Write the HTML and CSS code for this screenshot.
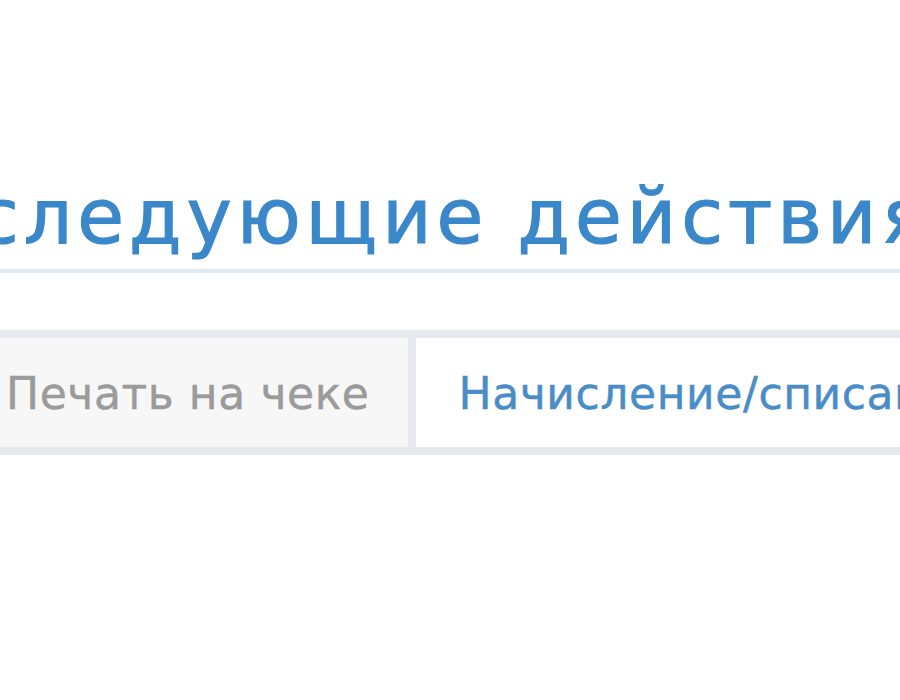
FILE: index.html
```html
<!DOCTYPE html>
<html lang="ru">
<head>
<meta charset="utf-8">
<link rel="stylesheet" href="styles.css">
</head>
<body>
<div class="page">
  <h2 class="title">следующие действия</h2>
  <div class="tabs">
    <div class="tab tab-active">Печать на чеке</div>
    <div class="tab tab-link">Начисление/списание баллов</div>
  </div>
</div>
</body>
</html>
```
FILE: styles.css
```css
html, body {
  margin: 0;
  padding: 0;
  background: #ffffff;
  overflow: hidden;
}
.page {
  width: 900px;
  height: 700px;
  overflow: hidden;
  font-family: "DejaVu Sans", Verdana, sans-serif;
  padding-top: 167px;
  box-sizing: border-box;
}
.title {
  margin: 0 0 0 -23px;
  font-weight: normal;
  font-size: 76px;
  letter-spacing: 5px;
  line-height: 100px;
  color: #3a87c9;
  -webkit-text-stroke: 1.2px #3a87c9;
  white-space: nowrap;
  padding-bottom: 2px;
  border-bottom: 4px solid #dfe9f4;
  width: 1200px;
}
.tabs {
  margin: 57px 0 0 -36px;
  display: flex;
  border-top: 8px solid #e6eaef;
  border-bottom: 8px solid #e6eaef;
  width: 1300px;
  white-space: nowrap;
}
.tab {
  font-size: 44px;
  line-height: 106px;
  letter-spacing: 0.6px;
  padding: 3px 43px 0;
}
.tab-active {
  padding-left: 42px;
  padding-right: 38px;
  background: #f7f7f7;
  color: #9b9b9b;
  -webkit-text-stroke: 0.5px #9b9b9b;
  border-right: 8px solid #e6eaef;
}
.tab-link {
  color: #4a8dc6;
  -webkit-text-stroke: 0.5px #4a8dc6;
}
```
